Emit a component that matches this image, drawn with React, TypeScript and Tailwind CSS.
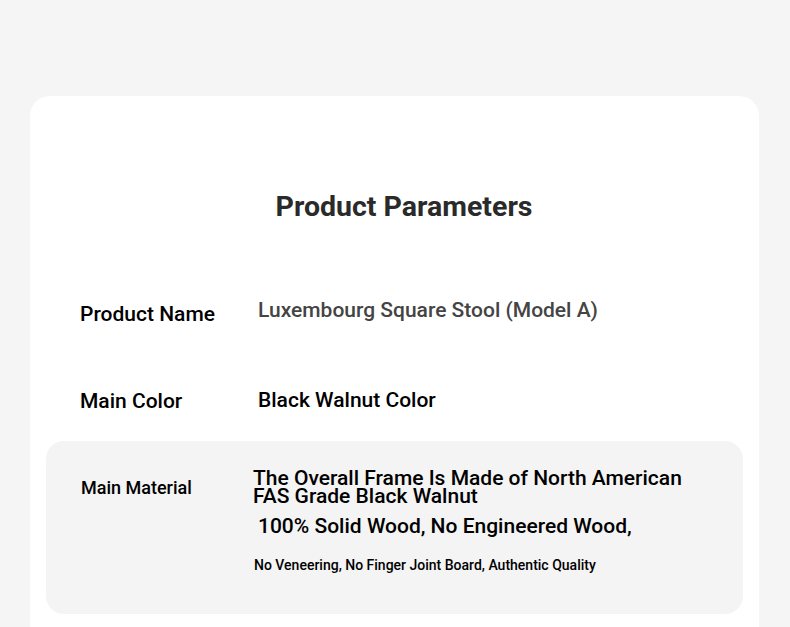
import React from "react";

export default function App() {
  return (
    <div
      className="min-h-[627px] w-full bg-[#f5f5f5] pt-[96px] pl-[30px]"
      style={{ fontFamily: "Roboto, 'Noto Sans', sans-serif" }}
    >
      <div className="w-[729px] h-[600px] rounded-[20px] bg-white pt-[95px] pl-[16px] pr-[16px]">
        <div className="flex justify-center pl-[19px]">
          <h1 className="text-[28.5px] leading-[32px] font-bold text-[#2a2a2a]">Product Parameters</h1>
        </div>

        <div className="mt-[73px] flex items-start pl-[34px]">
          <div className="w-[178px] mt-[4px] text-[21px] leading-[28px] font-medium text-black">Product Name</div>
          <div className="text-[21px] leading-[28px] font-medium text-[#444444]">Luxembourg Square Stool (Model A)</div>
        </div>

        <div className="mt-[58px] flex items-start pl-[34px]">
          <div className="w-[178px] mt-[1px] text-[21px] leading-[28px] font-medium text-black">Main Color</div>
          <div className="text-[21px] leading-[28px] font-medium text-black">Black Walnut Color</div>
        </div>

        <div className="mt-[26px] h-[173px] rounded-[18px] bg-[#f4f4f4] flex items-start pt-[28px] pl-[35px]">
          <div className="w-[172px] mt-[7px] text-[18px] leading-[24px] font-medium text-black">Main Material</div>
          <div className="flex flex-col items-start text-black">
            <div className="text-[21px] leading-[18px] font-medium">
              The Overall Frame Is Made of North American
              <br />
              FAS Grade Black Walnut
            </div>
            <div className="mt-[7px] ml-[5px] text-[21px] leading-[28px] font-medium">100% Solid Wood, No Engineered Wood,</div>
            <div className="mt-[15px] ml-[1px] text-[14px] leading-[20px] font-medium">
              No Veneering, No Finger Joint Board, Authentic Quality
            </div>
          </div>
        </div>
      </div>
    </div>
  );
}
